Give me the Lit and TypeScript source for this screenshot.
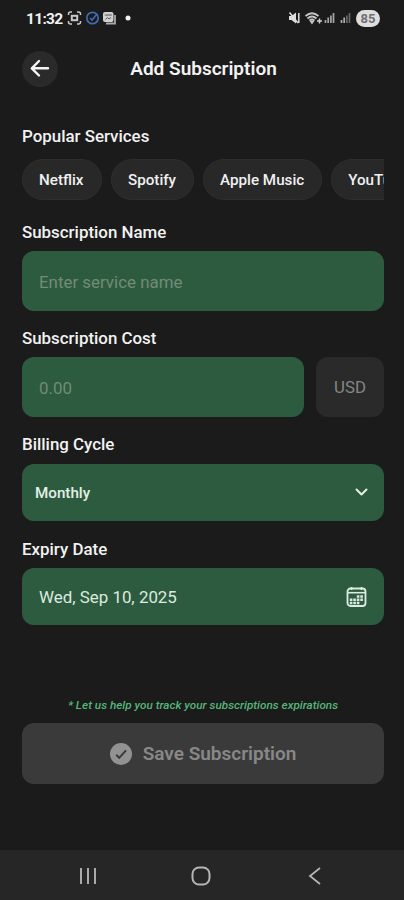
import { LitElement, html, css, svg } from "lit";
import { customElement, state } from "lit/decorators.js";

@customElement("app-root")
export class AppRoot extends LitElement {
  @state() services = ["Netflix", "Spotify", "Apple Music", "YouTube"];

  static styles = css`
    :host {
      display: flex;
      flex-direction: column;
      width: 404px;
      height: 900px;
      overflow: hidden;
      background: #1b1b1b;
      color: #f2f2f2;
      font-family: Roboto, "Liberation Sans", sans-serif;
      box-sizing: border-box;
    }
    * { box-sizing: border-box; }
    svg { display: block; flex: none; }
    .status {
      height: 36px;
      padding: 0 24px 0 26px;
      display: flex;
      align-items: center;
      justify-content: space-between;
    }
    .left, .right { display: flex; align-items: center; }
    .time { font-size: 15.5px; font-weight: 700; letter-spacing: -0.7px; width: 36px; white-space: nowrap; margin-right: 5px; padding-top: 1px; }
    .battery {
      width: 24px; height: 17px; border-radius: 9px; background: #dedede; color: #707070;
      font-size: 13px; font-weight: 700; line-height: 17.5px; text-align: center; margin-left: 5px;
    }
    .header {
      height: 65px;
      padding: 0 22px;
      display: grid;
      grid-template-columns: 36px 1fr 36px;
      align-items: center;
    }
    .back {
      width: 36px; height: 36px; border-radius: 50%; background: #2a2a2a;
      display: grid; place-items: center;
    }
    .title { text-align: center; font-size: 19px; font-weight: 600; white-space: nowrap; padding: 0 0 1px 3px; }
    .form { display: flex; flex-direction: column; padding: 23px 20px 0 22px; }
    .label { font-size: 16.9px; line-height: 24px; font-weight: 500; white-space: nowrap; }
    .chips { display: flex; gap: 9px; overflow: hidden; margin: 11px 0 20px; }
    .chip {
      flex: none; height: 41px; border-radius: 21px; background: #282828; border: 1px solid #2e2e2e;
      padding: 1px 17px 0 16px; font-size: 15.2px; font-weight: 500; line-height: 39px; color: #f0f0f0;
    }
    .chip:first-child { padding-right: 17.5px; }
    .field {
      display: flex; align-items: center; justify-content: space-between;
      border-radius: 12px; background: #2d5b3f; padding: 0 17px; font-size: 16.9px;
    }
    .entry { height: 59.5px; color: #728c75; margin: 7px 0 15.5px; flex: 1 0 auto; padding-top: 2px; }
    .row { display: flex; gap: 12px; }
    .currency {
      width: 68px; height: 59.5px; margin-top: 7px; border-radius: 12px; background: #2a2a2a; color: #858585;
      display: grid; place-items: center; font-size: 16.8px;
    }
    .select { height: 57px; margin: 7.5px 0 16px; padding: 1px 16px 0 13px; font-size: 15.2px; font-weight: 500; color: #e3f0e5; }
    .date { height: 57.5px; margin-top: 7px; padding-top: 1.5px; color: #dcebdf; }
    .hint {
      margin-top: 71.5px; text-align: center; font-size: 11.75px; line-height: 16px; font-style: italic;
      font-weight: 500; color: #55b578; white-space: nowrap;
    }
    .save {
      height: 61.5px; margin-top: 10px; border-radius: 12px; background: #3a3a3a; color: #888;
      display: flex; align-items: center; justify-content: center; gap: 11px;
      font-size: 19px; font-weight: 600; padding-top: 1px;
    }
    .nav {
      margin-top: auto; height: 50px; background: #262626;
      display: grid; grid-template-columns: 1fr 28px 1fr; align-items: center;
      padding: 1px 81px 0 78px;
    }
    .nav svg:last-child { justify-self: end; }
  `;

  statusLeft() {
    return svg`<svg width="66" height="16" viewBox="0 0 66 16" fill="none">
      <g stroke="#c9c9c9" stroke-width="1.5">
        <path d="M1.500 5V4q0-2 2-2h1.500M10 2h1.500q2 0 2 2v1M13.500 11v1q0 2-2 2H10M5 14H3.500q-2 0-2-2v-1"/>
        <rect x="4.800" y="5.800" width="5.400" height="4.400" stroke-width="2"/>
      </g>
      <circle cx="25.500" cy="8" r="5.700" stroke="#416bb5" stroke-width="1.700"/>
      <path d="m23 8 2 2 5-6" stroke="#416bb5" stroke-width="1.600"/>
      <path d="M39 13.500h9V5" stroke="#a9a9a9" stroke-width="1.800"/>
      <rect x="36" y="2" width="10.500" height="10" rx="2" fill="#d0d0d0"/>
      <path d="M37.800 5h7M38.500 9.500l2-2 1.500 1.500 2-1.500" stroke="#555"/>
      <circle cx="61" cy="8" r="2.500" fill="#f2f2f2"/>
    </svg>`;
  }

  statusRight() {
    return svg`<svg width="63" height="16" viewBox="0 0 63 16" fill="none">
      <path d="M1 6h2.500L8 2.500v11L3.500 10H1z" fill="#dedede"/>
      <path d="M1.500 2.500 10 13M10.800 3v10" stroke="#dedede" stroke-width="1.500"/>
      <g stroke="#c4c4c4" stroke-width="1.700">
        <path d="M17.500 6q6.500-5.500 13 0M19.500 8.500q4.500-4 9 0M21.500 10.500q2.500-2 5 0"/>
        <path d="m24 13-1-1.500h2z"/>
      </g>
      <path d="M31.500 8.500v5M29 11h5" stroke="#d0d0d0" stroke-width="1.500"/>
      <g stroke-width="1.700">
        <path d="M37.500 10v3M40.200 7.500V13M42.900 5.500V13M45.500 3v10" stroke="#a5a5a5"/>
        <path d="M53.500 10v3M56.200 7.500V13" stroke="#b0b0b0"/>
        <path d="M58.900 5.500V13M61.500 3v10" stroke="#666"/>
      </g>
    </svg>`;
  }

  render() {
    return html`
      <div class="status">
        <div class="left"><span class="time">11:32</span>${this.statusLeft()}</div>
        <div class="right">${this.statusRight()}<span class="battery">85</span></div>
      </div>
      <div class="header">
        <div class="back">
          <svg width="20" height="20" viewBox="0 0 20 20" fill="none" stroke="#f5f5f5" stroke-width="2.400" stroke-linecap="round" stroke-linejoin="round">
            <path d="M9 2 1.800 9.300 9 16.500M2 9.300h16"/>
          </svg>
        </div>
        <div class="title">Add Subscription</div>
      </div>
      <div class="form">
        <div class="label">Popular Services</div>
        <div class="chips">${this.services.map((s) => html`<div class="chip">${s}</div>`)}</div>
        <div class="label">Subscription Name</div>
        <div class="field entry">Enter service name</div>
        <div class="label">Subscription Cost</div>
        <div class="row">
          <div class="field entry">0.00</div>
          <div class="currency">USD</div>
        </div>
        <div class="label">Billing Cycle</div>
        <div class="field select">Monthly
          <svg width="13" height="9" viewBox="0 0 13 9" fill="none" stroke="#e3f0e5" stroke-width="2" stroke-linecap="round" stroke-linejoin="round"><path d="m1.500 1.500 5 5 5-5"/></svg>
        </div>
        <div class="label">Expiry Date</div>
        <div class="field date">Wed, Sep 10, 2025
          <svg width="21" height="22" viewBox="0 0 21 22" fill="none" stroke="#dcebdf">
            <rect x="1.500" y="2.500" width="18" height="17.500" rx="3" stroke-width="1.800"/>
            <path d="M5.500 1v3M15.500 1v3" stroke-width="1.800"/>
            <path d="M2 6.700h17" stroke-width="1.600"/>
            <path d="M10.800 10.500h2.600M14.300 10.500h2.600M3.800 13.700h2.600M7.300 13.700h2.600M10.800 13.700h2.600M14.300 13.700h2.600M3.800 17h2.600M7.300 17h2.600M10.800 17h2.600" stroke-width="2.500"/>
          </svg>
        </div>
        <div class="hint">* Let us help you track your subscriptions expirations</div>
        <div class="save">
          <svg width="22" height="22" viewBox="0 0 22 22" fill="none"><circle cx="11" cy="11" r="11" fill="#929292"/><path d="m6.200 11.800 3 3 6.800-7.500" stroke="#3a3a3a" stroke-width="2"/></svg>
          <span>Save Subscription</span>
        </div>
      </div>
      <div class="nav">
        <svg width="20" height="18" viewBox="0 0 20 18" stroke="#aaa" stroke-width="2"><path d="M3 1v16M10 1v16M17 1v16"/></svg>
        <svg width="28" height="20" viewBox="0 0 28 20" fill="none" stroke="#b5b5b5" stroke-width="2"><rect x="5.500" y="1.500" width="17" height="17" rx="6.500"/></svg>
        <svg width="18" height="18" viewBox="0 0 18 18" fill="none" stroke="#b5b5b5" stroke-width="1.800"><path d="M15 1 5 9l10 8"/></svg>
      </div>
    `;
  }
}
